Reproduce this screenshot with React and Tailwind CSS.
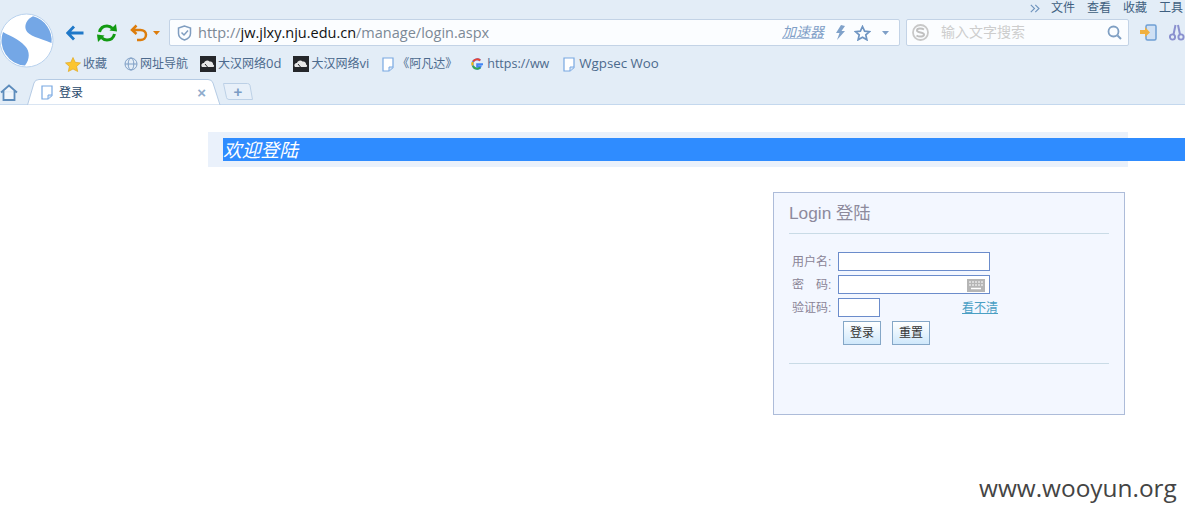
import React from "react";

const ui = { fontFamily: '"Open Sans","Noto Sans CJK SC",sans-serif' };
const cjk = { fontFamily: '"Liberation Sans","Noto Sans CJK SC",sans-serif' };

function Logo() {
  return (
    <svg width="54" height="55" viewBox="0 0 54 55" className="shrink-0">
      <circle cx="26.5" cy="27.5" r="26.5" fill="#fff" stroke="#b9d2ee" strokeWidth="1" />
      <path d="M33 3.300C27 6 24 12 26 17c2 6 14 8 25.500 13A25 25 0 0 0 33 3.300z" fill="#74a7e6" />
      <path d="M3 19c5 3.500 15 6 22 14 5 5 5 13 0 19.500A25 25 0 0 1 3 19z" fill="#74a7e6" />
    </svg>
  );
}
const Back = () => (
  <svg width="18" height="16" viewBox="0 0 18 16" className="shrink-0">
    <path d="M8 1.500 1.800 8 8 14.500M2 8h15.500" fill="none" stroke="#1f78c8" strokeWidth="2.800" />
  </svg>
);
const Refresh = () => (
  <svg width="22" height="20" viewBox="0 0 22 20" className="shrink-0">
    <path d="M3.500 9C4.500 5 7.500 3 11 3c2.200 0 4 .8 5.300 2.200" fill="none" stroke="#129a12" strokeWidth="3" />
    <path d="M13.500 7.500 21 8.500 20 1z" fill="#129a12" />
    <path d="M18.500 11c-1 4-4 6-7.500 6-2.200 0-4-.8-5.300-2.200" fill="none" stroke="#129a12" strokeWidth="3" />
    <path d="M8.500 12.500 1 11.500 2 19z" fill="#129a12" />
  </svg>
);
const Undo = () => (
  <svg width="18" height="18" viewBox="0 0 18 18" className="shrink-0">
    <path d="M6.500 1.500 2 6l4.500 4M2.500 6h8c3 0 5.500 1.800 5.500 4.800s-2.500 5.200-5.500 5.200H7" fill="none" stroke="#dd7d0c" strokeWidth="2.500" />
  </svg>
);
const Caret = ({ c = "#dd7d0c" }) => (
  <svg width="7" height="4" viewBox="0 0 7 4" className="shrink-0"><path d="M0 0h7L3.500 4z" fill={c} /></svg>
);
const Shield = () => (
  <svg width="15" height="16" viewBox="0 0 15 16" className="shrink-0">
    <path d="M7.500 1 1.500 3v5.500c0 3.300 3 5.500 6 6.500 3-1 6-3.200 6-6.500V3z" fill="none" stroke="#7f9dc0" strokeWidth="1.500" />
    <path d="M4.500 7.500 7 10l4-4.500" fill="none" stroke="#7f9dc0" strokeWidth="1.500" />
  </svg>
);
const Bolt = () => (
  <svg width="11" height="15" viewBox="0 0 11 15" className="shrink-0">
    <path d="M6 0 1 8h3.500L2 15l8-9H6.500L10 1z" fill="#80a2ca" />
  </svg>
);
const StarO = () => (
  <svg width="17" height="16" viewBox="0 0 17 16" className="shrink-0">
    <path d="m8.500 1.500 2.100 4.600 5 .5-3.800 3.300 1.100 4.900-4.400-2.600-4.400 2.600 1.100-4.900L1.400 6.600l5-.5z" fill="none" stroke="#6f95c2" strokeWidth="1.700" />
  </svg>
);
const SogouS = () => (
  <svg width="17" height="17" viewBox="0 0 17 17" className="shrink-0">
    <circle cx="8.500" cy="8.500" r="7.500" fill="none" stroke="#c8c8c8" strokeWidth="1.800" />
    <path d="M12 5.500C10 4.300 5 4 5 6.500s7 1.500 7 4-5 2.500-7.500 1" fill="none" stroke="#c0c0c0" strokeWidth="2" />
  </svg>
);
const Search = () => (
  <svg width="15" height="15" viewBox="0 0 15 15" className="shrink-0">
    <circle cx="6.500" cy="6.500" r="5" fill="none" stroke="#7f9fc3" strokeWidth="1.800" />
    <path d="m10.500 10.500 3.500 3.500" stroke="#7f9fc3" strokeWidth="2" />
  </svg>
);
const Phone = () => (
  <svg width="17" height="17" viewBox="0 0 17 17" className="shrink-0">
    <rect x="6" y="1" width="10" height="15" rx="1.500" fill="#cfe0f4" stroke="#6f9fd4" strokeWidth="1.500" />
    <path d="M0 6h5V3l5 5.500L5 13v-3H0z" fill="#f0b040" />
  </svg>
);
const Scissors = () => (
  <svg width="16" height="17" viewBox="0 0 16 17" className="shrink-0">
    <circle cx="3.500" cy="13" r="2.600" fill="none" stroke="#8a90cf" strokeWidth="1.900" />
    <circle cx="12" cy="13" r="2.600" fill="none" stroke="#8a90cf" strokeWidth="1.900" />
    <path d="M4.500 10.500 6.500 1M11 10.500 9 1" fill="none" stroke="#8a90cf" strokeWidth="2" />
  </svg>
);
const Chevrons = () => (
  <svg width="10" height="9" viewBox="0 0 10 9" className="shrink-0">
    <path d="m.8.800 3.700 3.700L.8 8.200M5.300.8 9 4.500 5.300 8.200" fill="none" stroke="#6e93bd" strokeWidth="1.100" />
  </svg>
);
const Fav = () => (
  <svg width="16" height="15" viewBox="0 0 16 15" className="shrink-0">
    <path d="m8 .5 2.200 4.800 5.300.6-3.900 3.500 1.100 5.100L8 12l-4.700 2.500 1.100-5.100L.5 5.900l5.300-.6z" fill="#fbc531" stroke="#e3a920" strokeWidth=".7" />
  </svg>
);
const Globe = () => (
  <svg width="14" height="14" viewBox="0 0 14 14" className="shrink-0">
    <g fill="none" stroke="#7f9fc6" strokeWidth="1">
      <circle cx="7" cy="7" r="6" />
      <ellipse cx="7" cy="7" rx="2.800" ry="6" />
      <path d="M1 7h12" />
    </g>
  </svg>
);
const Cloud = () => (
  <svg width="16" height="16" viewBox="0 0 16 16" className="shrink-0">
    <rect width="16" height="16" fill="#25272b" />
    <path d="M2 11c-1.500-2 0-4 2-4 .5-2.500 4-3.500 5.500-1.500 2-.5 4 1 3.500 3 1.500.5 1.500 2.500 0 2.500z" fill="#e8e8e8" />
    <path d="M5 8 7.500 11" stroke="#25272b" />
  </svg>
);
const Doc = () => (
  <svg width="12" height="15" viewBox="0 0 12 15" className="shrink-0">
    <path d="M1 1h10v9.500L7 14H1z" fill="#fff" stroke="#78a8e2" strokeWidth="1.200" />
    <path d="M11 10H7v4" fill="#dbe8f7" stroke="#78a8e2" strokeWidth="1" />
  </svg>
);
const Google = () => (
  <svg width="14" height="14" viewBox="0 0 14 14" className="shrink-0">
    <path d="M13 7.200H7.200v2.300h3.300c-.4 1.400-1.700 2.200-3.300 2.200a4.700 4.700 0 0 1 0-9.400c1.200 0 2.200.4 3 1.200" fill="none" stroke="#4285f4" strokeWidth="2" />
    <path d="M3.200 4.400A4.700 4.700 0 0 1 10.200 3.500" fill="none" stroke="#ea4335" strokeWidth="2" />
    <path d="M2.700 8.500a4.700 4.700 0 0 1 0-3.500" fill="none" stroke="#fbbc05" strokeWidth="2" />
    <path d="M2.900 9a4.700 4.700 0 0 0 7.400 1.500" fill="none" stroke="#34a853" strokeWidth="2" />
  </svg>
);
const Home = () => (
  <svg width="18" height="17" viewBox="0 0 18 17" className="shrink-0">
    <path d="M1 8.500 9 1.500l8 7M3.500 7v9h11V7" fill="#f0f5fb" stroke="#5d8cbc" strokeWidth="1.800" />
  </svg>
);
const Keyboard = () => (
  <svg width="18" height="13" viewBox="0 0 18 13" className="absolute right-[4px] top-[3px]">
    <rect width="18" height="13" fill="#b5b5b5" />
    <path d="M2 3h14M2 6h14" stroke="#fff" strokeWidth="1" strokeDasharray="2 1" />
    <path d="M4 9.500h10" stroke="#fff" strokeWidth="1.500" />
  </svg>
);

function Bookmark({ icon, label, gap, cls, size = "text-[13px]" }) {
  return (
    <div className={`flex items-center shrink-0 ${cls}`}>
      {icon}
      <span className={`${size} text-[#4c6a8d] whitespace-nowrap ${gap}`} style={ui}>{label}</span>
    </div>
  );
}
const C = ({ children }) => <span className="text-[12px]">{children}</span>;

function Field({ label, inputCls, children }) {
  return (
    <div className="flex items-center h-[19px] mt-[4px] pl-[3px]">
      <span className="w-[46px] text-[12px] text-[#8a8496] whitespace-pre" style={cjk}>{label}</span>
      <div className={`relative h-[19px] border border-[#6b8ccb] bg-white ${inputCls}`}>{children}</div>
    </div>
  );
}

export default function App() {
  return (
    <div className="relative w-[1185px] h-[517px] overflow-hidden bg-white" style={cjk}>
      <header className="h-[105px] bg-[#e3edf7] border-b border-[#c4d8ee] flex flex-col">
        <div className="flex h-[79px]">
          <div className="w-[66px] shrink-0 pt-[13px]"><Logo /></div>
          <div className="flex-1 min-w-0 flex flex-col">
            <nav className="h-[19px] flex items-start justify-end pt-px text-[12px] text-[#3f5f80] whitespace-nowrap">
              <span className="mr-[11px] h-[15px] flex items-center"><Chevrons /></span>
              <span className="leading-[15px] mr-[12px]">文件</span>
              <span className="leading-[15px] mr-[12px]">查看</span>
              <span className="leading-[15px] mr-[12px]">收藏</span>
              <span className="leading-[15px] w-[26px]">工具</span>
            </nav>
            <div className="h-[27px] flex items-center">
              <Back />
              <div className="ml-[12px]"><Refresh /></div>
              <div className="ml-[12px]"><Undo /></div>
              <div className="ml-[5px]"><Caret /></div>
              <div className="ml-[9px] w-[731px] h-[27px] shrink-0 flex items-center bg-[#fbfdff] border border-[#c3d3e6] rounded-[2px] pl-[7px] pr-[10px]">
                <Shield />
                <span className="ml-[6px] text-[14.500px] text-[#7c8996] whitespace-nowrap" style={ui}>http://<span className="text-[#111]">jw.jlxy.nju.edu.cn</span>/manage/login.aspx</span>
                <span className="ml-auto text-[14px] italic text-[#7f9fc7] underline decoration-[#a9c0dc]">加速器</span>
                <div className="ml-[11px]"><Bolt /></div>
                <div className="ml-[8px]"><StarO /></div>
                <div className="ml-[11px]"><Caret c="#7f9fc7" /></div>
              </div>
              <div className="ml-[6px] w-[223px] h-[27px] shrink-0 flex items-center bg-[#fbfdff] border border-[#c3d3e6] rounded-[2px] pl-[5px] pr-[6px]">
                <SogouS />
                <span className="ml-[12px] text-[14px] text-[#cdcdcd] whitespace-nowrap">输入文字搜索</span>
                <div className="ml-auto"><Search /></div>
              </div>
              <div className="ml-[11px]"><Phone /></div>
              <div className="ml-[12px]"><Scissors /></div>
            </div>
            <div className="mt-[9px] h-[18px] flex items-center -ml-[1px]">
              <Bookmark icon={<Fav />} label={<C>收藏</C>} gap="ml-[2px]" cls="" />
              <Bookmark icon={<Globe />} label={<C>网址导航</C>} gap="ml-[2px]" cls="ml-[17px]" />
              <Bookmark icon={<Cloud />} label={<><C>大汉网络</C>0d</>} gap="ml-[2px]" cls="ml-[12px]" />
              <Bookmark icon={<Cloud />} label={<><C>大汉网络</C>vi</>} gap="ml-[2px]" cls="ml-[12px]" />
              <Bookmark icon={<Doc />} label={<C>《阿凡达》</C>} gap="ml-[3px]" cls="ml-[13px]" />
              <Bookmark icon={<Google />} label="https://ww" size="text-[12.500px]" gap="ml-[3px]" cls="ml-[13px]" />
              <Bookmark icon={<Doc />} label="Wgpsec Woo" size="text-[13.300px]" gap="ml-[4px]" cls="ml-[14px]" />
            </div>
          </div>
        </div>
        <div className="h-[25px] flex items-end">
          <div className="h-[25px] w-[27px] shrink-0 pt-[5px]"><Home /></div>
          <div className="relative w-[194px] h-[25px] shrink-0 flex items-center pl-[14px] pr-[15px] pt-[2px]">
            <svg width="194" height="26" viewBox="0 0 194 26" className="absolute left-0 top-0">
              <path d="M.500 26 7 4Q8 .500 12 .500h169q4 0 5 3.500l7 22z" fill="#fff" stroke="#b5cbe4" />
            </svg>
            <span className="relative flex items-center">
              <Doc />
              <span className="ml-[6px] text-[12px] text-[#28486b]">登录</span>
            </span>
            <span className="relative ml-auto text-[#8faccd] text-[15px] leading-none font-bold">×</span>
          </div>
          <div className="relative ml-[2px] mb-[4px] w-[30px] h-[17px] shrink-0 flex items-center justify-center">
            <svg width="30" height="17" viewBox="0 0 30 17" className="absolute left-0 top-0">
              <path d="M.500.500h24q2 0 2.500 2l2.500 14H6q-2 0-2.500-2z" fill="#e8f0f9" stroke="#bcd0e6" />
            </svg>
            <span className="relative text-[#7b9cc4] text-[15px] leading-none font-bold">+</span>
          </div>
        </div>
      </header>

      <main className="pl-[208px] pt-[27px]">
        <div className="w-[920px] h-[35px] bg-[#eaf1fb] pt-[6px] pl-[15px]">
          <div className="w-[962px] h-[23px] bg-[#2f8cff] text-white italic text-[18.800px] leading-[25px] overflow-hidden">欢迎登陆</div>
        </div>
        <section className="ml-[565px] mt-[25px] w-[352px] h-[223px] border border-[#adbcd9] bg-[#f3f7ff] px-[15px]">
          <h1 className="h-[41px] pt-[8px] text-[17.300px] leading-[24px] text-[#8d8a9c] border-b border-[#c9dbe6]">Login 登陆</h1>
          <div className="pt-[14px]">
            <Field label="用户名:" inputCls="w-[152px]" />
            <Field label="密　码:" inputCls="w-[152px]"><Keyboard /></Field>
            <div className="flex items-start">
              <Field label="验证码:" inputCls="w-[42px]" />
              <a className="mt-[4px] pt-[1px] h-[19px] leading-[18px] ml-[82px] text-[12px] text-[#4a9fc4] underline">看不清</a>
            </div>
            <div className="flex mt-[4px] pl-[54px] gap-[11px]">
              <button className="w-[38px] h-[24px] border border-[#85a7c7] bg-gradient-to-b from-white to-[#cfe8fb] text-[12px] text-[#333]">登录</button>
              <button className="w-[38px] h-[24px] border border-[#85a7c7] bg-gradient-to-b from-white to-[#cfe8fb] text-[12px] text-[#333]">重置</button>
            </div>
            <div className="mt-[18px] border-t border-[#c9dbe6]" />
          </div>
        </section>
      </main>

      <div className="absolute left-[979px] top-[472px] text-[24.400px] leading-[32px] text-[#444] whitespace-nowrap" style={ui}>www.wooyun.org</div>
    </div>
  );
}
